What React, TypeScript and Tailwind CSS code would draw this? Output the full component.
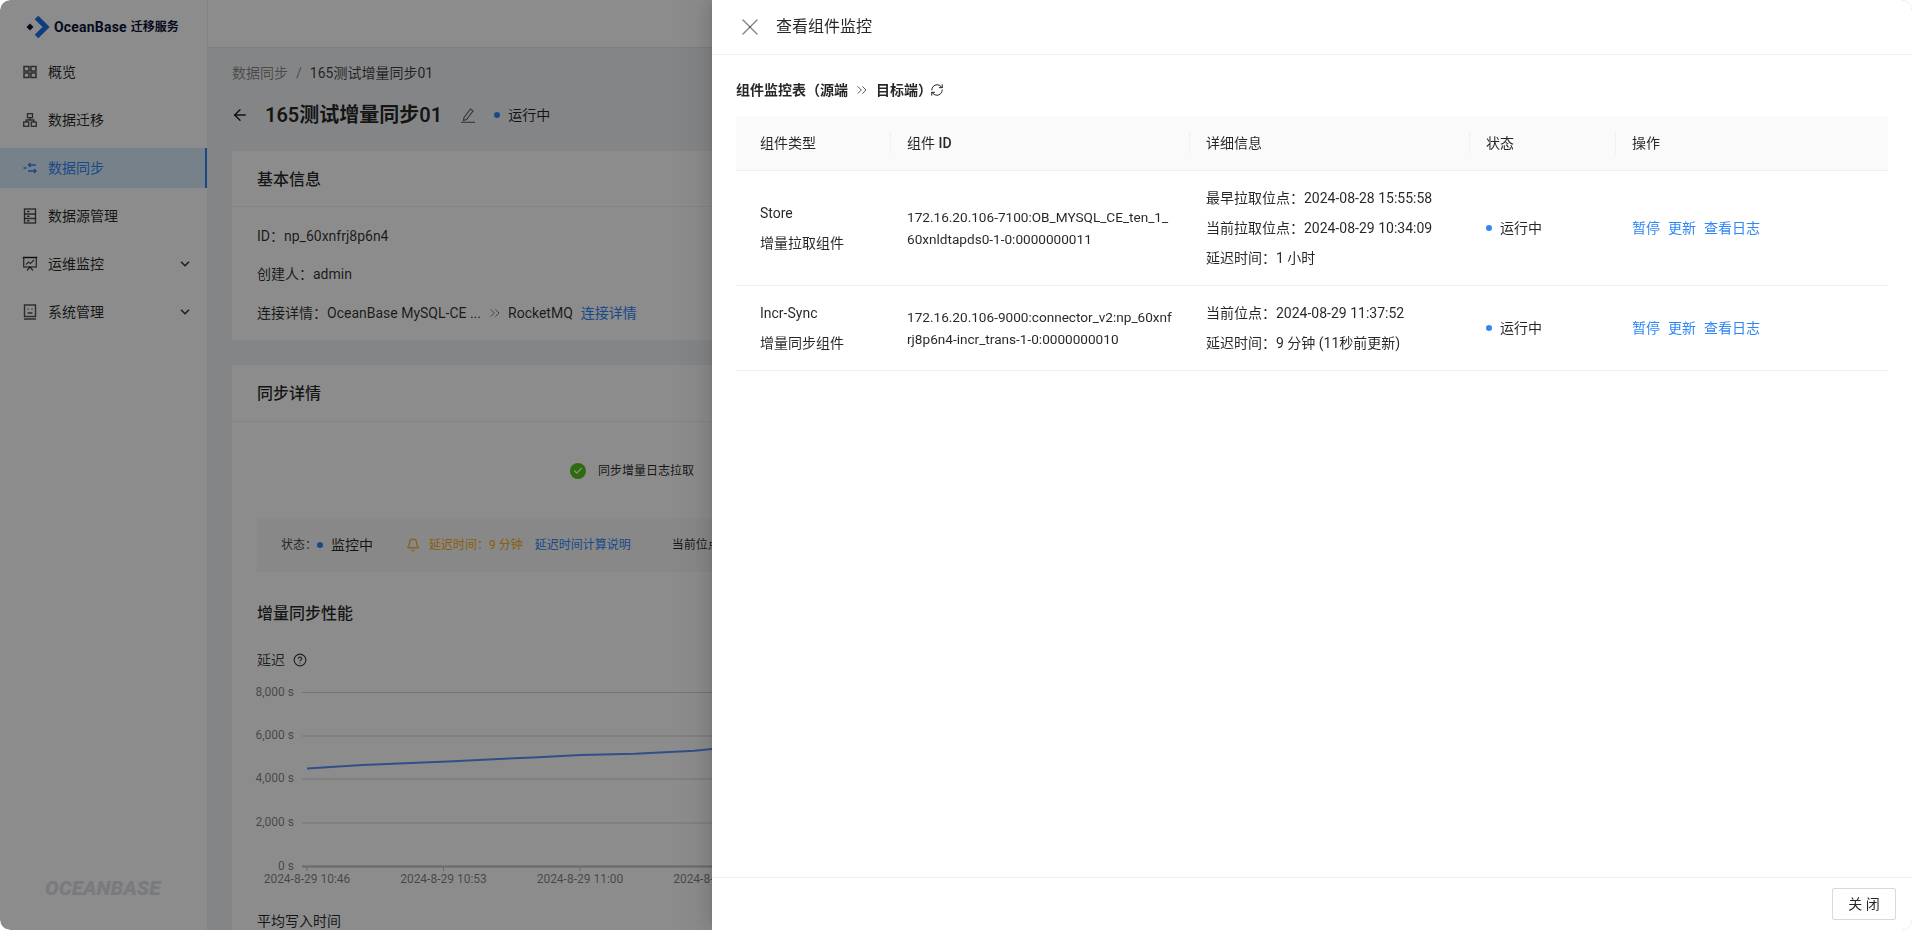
import React from "react";
import { ArrowLeft, Bell, Check, ChevronDown, ChevronsRight, CircleHelp, RefreshCw, X } from "lucide-react";

const FONT = "font-['Roboto','Noto_Sans_CJK_SC',sans-serif]";

function IconGrid() {
  return (
    <svg width="14" height="14" viewBox="0 0 14 14" fill="none" stroke="currentColor" strokeWidth="1.5">
      <rect x="1" y="1.5" width="5" height="4.5" />
      <rect x="8" y="1.5" width="5" height="4.5" />
      <rect x="1" y="8" width="5" height="4.5" />
      <rect x="8" y="8" width="5" height="4.5" />
    </svg>
  );
}
function IconNet() {
  return (
    <svg width="14" height="14" viewBox="0 0 14 14" fill="none" stroke="currentColor" strokeWidth="1.3">
      <rect x="4.5" y="0.7" width="5" height="4" />
      <rect x="0.7" y="9" width="5" height="4.3" />
      <rect x="8.3" y="9" width="5" height="4.3" />
      <path d="M7 4.7V7M3.2 9V7h7.6v2" />
    </svg>
  );
}
function IconSync() {
  return (
    <svg width="14" height="14" viewBox="0 0 14 14" fill="none" stroke="currentColor" strokeWidth="1.4">
      <path d="M13 4H5.5M7.5 2 5.5 4l2 2" />
      <path d="M5 10h8M11 8l2 2-2 2" />
      <path d="M0.5 7h3" />
    </svg>
  );
}
function IconSource() {
  return (
    <svg width="14" height="16" viewBox="0 0 14 16" fill="none" stroke="currentColor" strokeWidth="1.4">
      <rect x="1.5" y="1" width="11" height="14" />
      <path d="M1.5 6h11M1.5 10.5h11M4 3.5h2.5M4 8.2h2.5M4 12.8h2.5" />
    </svg>
  );
}
function IconMonitor() {
  return (
    <svg width="16" height="16" viewBox="0 0 16 16" fill="none" stroke="currentColor" strokeWidth="1.3">
      <path d="M0.7 1.5h14.6" />
      <rect x="1.7" y="1.5" width="12.6" height="9.5" />
      <path d="M4 8.5 6.5 6l2 1.5L12 4M5 14.5 8 11l3 3.5" />
    </svg>
  );
}
function IconSystem() {
  return (
    <svg width="14" height="16" viewBox="0 0 14 16" fill="none" stroke="currentColor" strokeWidth="1.4">
      <rect x="1.5" y="1" width="11" height="11.5" />
      <path d="M1 15h12M4.5 9h5" />
      <path d="M4.5 5h1M8.5 5h1" />
    </svg>
  );
}

function MenuItem({ icon, label, active, arrow }: { icon: React.ReactNode; label: string; active?: boolean; arrow?: boolean }) {
  return (
    <div
      className={`mb-[8px] flex h-[40px] items-center text-[14px] ${
        active ? "border-r-[2px] border-[#2f86f6] bg-[#d9ebfb] text-[#2f86f6]" : "text-[#000000d9]"
      }`}
    >
      <span className={`flex w-[48px] justify-center pr-[3px] pl-[14px] ${active ? "" : "text-[#000000b0]"}`}>{icon}</span>
      <span className="flex-1">{label}</span>
      {arrow && <ChevronDown className="mr-[15px] text-[#000000c0]" size={14} strokeWidth={3} />}
    </div>
  );
}

function Dot() {
  return <span className="inline-block h-[6px] w-[6px] rounded-full bg-[#2f86f6]" />;
}

function Chart() {
  const ys = [11.5, 55, 98, 142];
  const labels = ["8,000 s", "6,000 s", "4,000 s", "2,000 s"];
  const ticks = [
    [50, "2024-8-29 10:46"],
    [186.5, "2024-8-29 10:53"],
    [323, "2024-8-29 11:00"],
    [459.5, "2024-8-29 11:06"],
  ] as const;
  return (
    <svg width="700" height="215" className="mt-[10px] block overflow-visible" fontSize="12" fill="#00000080">
      {ys.map((y, i) => (
        <g key={y}>
          <line x1="45" x2="700" y1={y} y2={y} stroke="#d4d4d4" strokeWidth="1" />
          <text x="37" y={y + 3} textAnchor="end">{labels[i]}</text>
        </g>
      ))}
      <text x="37" y="189" textAnchor="end">0 s</text>
      <line x1="45" x2="700" y1="185.5" y2="185.5" stroke="#bdbdbd" strokeWidth="2" />
      {ticks.map(([x, t]) => (
        <g key={t}>
          <line x1={x} x2={x} y1="185" y2="190" stroke="#bdbdbd" />
          <text x={x} y="202" textAnchor="middle">{t}</text>
        </g>
      ))}
      <polyline
        fill="none"
        stroke="#5b8ff9"
        strokeWidth="2"
        points="50,87.4 105.6,84 196.5,80.3 242,78 276,76.5 324,74 378,72.8 437.5,69.8 455,67.9 540,62 640,55"
      />
    </svg>
  );
}

function BackgroundPage() {
  return (
    <div className="flex h-full overflow-hidden rounded-[10px] bg-white">
      <aside className="relative flex h-full w-[208px] shrink-0 flex-col border-r border-[#f0f0f0] bg-white">
        <div className="flex h-[52px] items-center pt-[2px] pl-[26px]">
          <svg width="24" height="24" viewBox="0 0 24 24" className="mr-[4px] shrink-0">
            <path d="M4 8.5 7.5 12 4 15.5.5 12z" fill="#0b1437" />
            <path d="M10.5 2.5 20 12l-9.5 9.5" fill="none" stroke="#1f6fe5" strokeWidth="5.2" />
          </svg>
          <span className="flex items-center text-[14px] font-bold tracking-[0.2px] whitespace-nowrap text-[#0b1437]">
            OceanBase<span className="ml-[4px] text-[12px] tracking-normal">迁移服务</span>
          </span>
        </div>
        <div>
          <MenuItem icon={<IconGrid />} label="概览" />
          <MenuItem icon={<IconNet />} label="数据迁移" />
          <MenuItem icon={<IconSync />} label="数据同步" active />
          <MenuItem icon={<IconSource />} label="数据源管理" />
          <MenuItem icon={<IconMonitor />} label="运维监控" arrow />
          <MenuItem icon={<IconSystem />} label="系统管理" arrow />
        </div>
        <div className="mt-auto mb-[26px] pl-[45px] text-[20.5px] font-black tracking-[0px] text-[#dddfe3] italic">OCEANBASE</div>
      </aside>
      <main className="flex min-w-0 flex-1 flex-col bg-[#f0f2f5]">
        <div className="h-[48px] shrink-0 border-b border-[#e4e6ea] bg-white" />
        <div className="flex-1 overflow-hidden px-[24px] pt-[14px]">
          <div className="flex h-[22px] items-center gap-[8px] text-[14px]">
            <span className="text-[#00000073]">数据同步</span>
            <span className="text-[#00000073]">/</span>
            <span className="text-[#000000c0]">165测试增量同步01</span>
          </div>
          <div className="mt-[15px] mb-[20px] flex h-[32px] items-center">
            <ArrowLeft size={18} className="ml-[-1px] text-[#000000d9]" />
            <span className="ml-[16px] text-[20px] font-semibold text-[#000000d9]">165测试增量同步01</span>
            <svg width="16" height="16" viewBox="0 0 16 16" fill="none" stroke="#00000099" strokeWidth="1.1" className="ml-[18px]">
              <path d="M4 10.5 10.5 2l2.5 2-6.5 8.5-3 1z" />
              <path d="M1 15.3h14" />
            </svg>
            <span className="mr-[8px] ml-[18px] flex"><Dot /></span>
            <span className="text-[14px] text-[#000000d9]">运行中</span>
          </div>

          <section className="mb-[25px] bg-white">
            <h3 className="flex h-[56px] items-center border-b border-[#f0f0f0] px-[25px] pt-[2px] text-[16px] font-medium text-[#000000d9]">基本信息</h3>
            <div className="px-[25px] pt-[18px] pb-[16px] text-[14px] leading-[22px] text-[#000000d0]">
              <p className="mb-[16px]">ID：np_60xnfrj8p6n4</p>
              <p className="mb-[17px]">创建人：admin</p>
              <p className="flex items-center">
                连接详情：OceanBase MySQL-CE ...
                <ChevronsRight size={16} strokeWidth={1.5} className="mr-[5px] ml-[6px] text-[#00000080]" />
                RocketMQ
                <span className="ml-[8px] text-[#2f86f6]">连接详情</span>
              </p>
            </div>
          </section>

          <section className="bg-white">
            <h3 className="flex h-[57px] items-center border-b border-[#f0f0f0] px-[25px] pt-[2px] text-[16px] font-medium text-[#000000d9]">同步详情</h3>
            <div className="px-[25px]">
              <div className="mt-[40px] flex h-[18px] items-center pl-[313px] text-[12px] text-[#000000d9]">
                <span className="mr-[12px] flex h-[16px] w-[16px] items-center justify-center rounded-full bg-[#52c41a]">
                  <Check size={10} strokeWidth={3} className="text-white" />
                </span>
                同步增量日志拉取
              </div>
              <div className="mt-[38px] flex h-[54px] items-center whitespace-nowrap bg-[#f8f8f8] pl-[24px] text-[12px]">
                <span className="text-[#000000c0]">状态：</span>
                <span className="mr-[8px] flex"><Dot /></span>
                <span className="text-[14px] text-[#000000d9]">监控中</span>
                <Bell size={14} className="ml-[33px] text-[#faad14]" />
                <span className="ml-[9px] text-[#faad14]">延迟时间：9 分钟</span>
                <span className="ml-[12px] text-[#2f86f6]">延迟时间计算说明</span>
                <span className="ml-[41px] text-[#000000d9]">当前位点：2024-08-29 11:37:52</span>
              </div>
              <h4 className="mt-[30px] h-[24px] text-[16px] leading-[24px] font-medium text-[#000000d9]">增量同步性能</h4>
              <div className="mt-[23px] flex h-[22px] items-center text-[14px] text-[#000000c0]">
                延迟
                <CircleHelp size={14} className="ml-[8px]" />
              </div>
              <Chart />
              <div className="mt-[14px] h-[22px] text-[14px] leading-[22px] text-[#000000d9]">平均写入时间</div>
            </div>
          </section>
        </div>
      </main>
    </div>
  );
}

function Actions() {
  return (
    <div className="flex gap-[8px] text-[#2f86f6]">
      <span>暂停</span>
      <span>更新</span>
      <span>查看日志</span>
    </div>
  );
}

function Status() {
  return (
    <div className="flex items-center gap-[8px]">
      <Dot />
      <span>运行中</span>
    </div>
  );
}

function Th({ children, first, last }: { children: React.ReactNode; first?: boolean; last?: boolean }) {
  return (
    <th className={`relative pt-[2px] text-left font-normal ${first ? "pl-[24px]" : "pl-[16px]"}`}>
      {children}
      {!last && <span className="absolute top-[16px] right-0 h-[22px] w-px bg-[#f0f0f0]" />}
    </th>
  );
}

function Drawer() {
  return (
    <div className="absolute top-0 right-0 bottom-0 flex w-[1200px] flex-col bg-white shadow-[-6px_0_16px_rgba(0,0,0,0.08),-3px_0_6px_-4px_rgba(0,0,0,0.12),-9px_0_28px_8px_rgba(0,0,0,0.05)]">
      <div className="flex h-[55px] shrink-0 items-center border-b border-[#f0f0f0] pl-[24px]">
        <X size={28} strokeWidth={1.1} className="text-[#00000080]" />
        <span className="ml-[12px] text-[16px] text-[#000000d9]">查看组件监控</span>
      </div>
      <div className="flex-1 px-[24px] text-[14px] text-[#000000d9]">
        <div className="mt-[24px] flex h-[22px] items-center font-bold">
          组件监控表（源端
          <ChevronsRight size={16} strokeWidth={1.5} className="mx-[6px] text-[#000000a6]" />
          目标端）
          <RefreshCw size={14} strokeWidth={1.7} className="ml-[-2px]" />
        </div>
        <table className="mt-[15px] w-[1152px] table-fixed border-collapse">
          <colgroup>
            <col className="w-[155px]" />
            <col className="w-[299px]" />
            <col className="w-[280px]" />
            <col className="w-[146px]" />
            <col />
          </colgroup>
          <thead>
            <tr className="h-[54px] border-b border-[#f0f0f0] bg-[#fafafa]">
              <Th first>组件类型</Th>
              <Th>组件 <span className="font-medium">ID</span></Th>
              <Th>详细信息</Th>
              <Th>状态</Th>
              <Th last>操作</Th>
            </tr>
          </thead>
          <tbody className="leading-[22px]">
            <tr className="h-[115px] border-b border-[#f0f0f0]">
              <td className="pl-[24px]">
                <p className="mb-[8px]">Store</p>
                <p>增量拉取组件</p>
              </td>
              <td className="px-[16px] text-[13.6px] whitespace-nowrap">
                172.16.20.106-7100:OB_MYSQL_CE_ten_1_
                <br />
                60xnldtapds0-1-0:0000000011
              </td>
              <td className="px-[16px]">
                <p className="mb-[8px]">最早拉取位点：2024-08-28 15:55:58</p>
                <p className="mb-[8px]">当前拉取位点：2024-08-29 10:34:09</p>
                <p>延迟时间：1 小时</p>
              </td>
              <td className="px-[16px]"><Status /></td>
              <td className="px-[16px]"><Actions /></td>
            </tr>
            <tr className="h-[85px] border-b border-[#f0f0f0]">
              <td className="pl-[24px]">
                <p className="mb-[8px]">Incr-Sync</p>
                <p>增量同步组件</p>
              </td>
              <td className="px-[16px] text-[13.6px] whitespace-nowrap">
                172.16.20.106-9000:connector_v2:np_60xnf
                <br />
                rj8p6n4-incr_trans-1-0:0000000010
              </td>
              <td className="px-[16px]">
                <p className="mb-[8px]">当前位点：2024-08-29 11:37:52</p>
                <p>延迟时间：9 分钟 (11秒前更新)</p>
              </td>
              <td className="px-[16px]"><Status /></td>
              <td className="px-[16px]"><Actions /></td>
            </tr>
          </tbody>
        </table>
      </div>
      <div className="flex h-[53px] shrink-0 items-start justify-end border-t border-[#f0f0f0] pt-[10px] pr-[16px]">
        <button className="h-[32px] w-[64px] rounded-[2px] border border-[#d9d9d9] bg-white text-[14px] text-[#000000d9]">关 闭</button>
      </div>
    </div>
  );
}

export default function App() {
  return (
    <div className={`relative h-screen w-screen overflow-hidden rounded-[10px] bg-white ${FONT}`}>
      <BackgroundPage />
      <div className="absolute inset-0 bg-[#00000073] backdrop-blur-[0.7px]" />
      <Drawer />
    </div>
  );
}
